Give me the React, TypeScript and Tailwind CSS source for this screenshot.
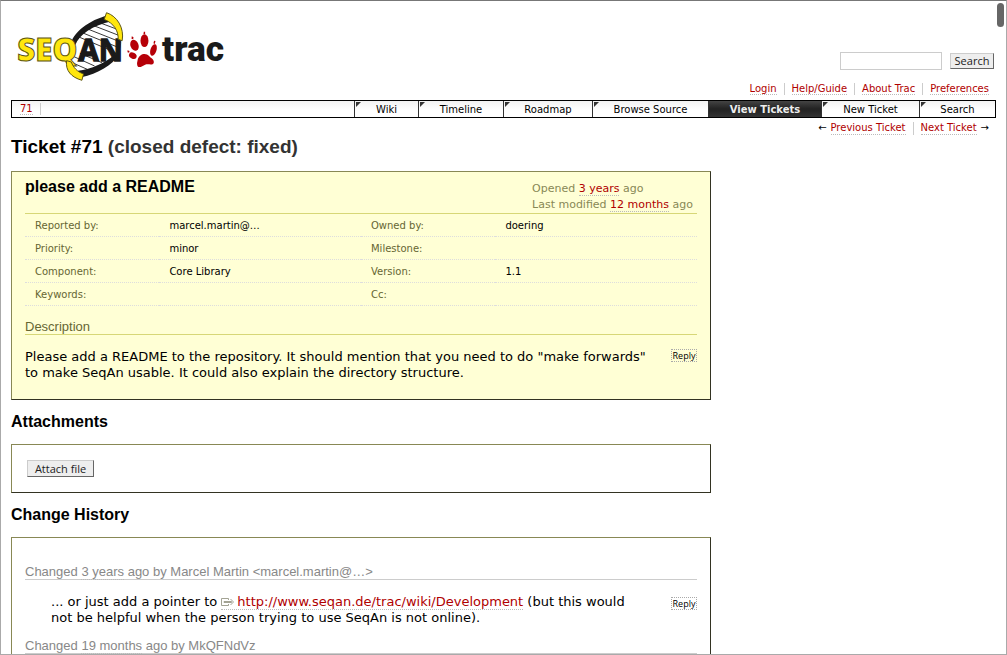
import React from "react";

const LINK =
  "text-[#b00000] border-b border-dotted border-[#bbbbbb] hover:bg-[#eeeeee]";
const BUTTON =
  "border border-t-[#cccccc] border-l-[#cccccc] border-r-[#666666] border-b-[#666666] bg-[#eeeeee] text-[11px] text-[#222222] font-['Open_Sans',sans-serif]";
const PANEL =
  "border border-t-[#888855] border-l-[#888855] border-r-[#333322] border-b-[#333322]";
const HEADING = "font-['Liberation_Sans',Arial,sans-serif] font-bold text-[16px] leading-5 text-black";

function Logo() {
  return (
    <svg
      role="img"
      aria-label="SeqAn trac"
      viewBox="45 30 640 216"
      className="block h-[72px] w-[213px]"
    >
      <path
        d="M320 50 C270 68 222 102 212 140 C204 170 206 200 238 224 C290 212 342 190 358 150 C370 118 358 72 320 50Z"
        fill="#ffffff"
        stroke="#1a1a1a"
        strokeWidth="2"
      />
      <g stroke="#1a1a1a" strokeWidth="2.6" fill="none">
        <path d="M294 66 L358 90" />
        <path d="M274 74 L362 108" />
        <path d="M256 84 L362 126" />
        <path d="M242 96 L350 140" />
        <path d="M230 108 L330 150" />
        <path d="M212 186 L262 208" />
        <path d="M222 170 L284 198" />
        <path d="M240 160 L306 188" />
      </g>
      <path
        d="M324 46 C270 58 216 98 212 136 L226 136 C238 104 278 76 336 64Z"
        fill="#1a1a1a"
      />
      <path
        d="M234 212 C276 208 314 188 340 168 L356 164 C338 196 294 220 244 232Z"
        fill="#1a1a1a"
      />
      <g fontFamily="'Open Sans', sans-serif" fontWeight="700">
        <text
          x="235"
          y="184"
          fontSize="89"
          fill="#1a1a1a"
          stroke="#1a1a1a"
          strokeWidth="4"
        >
          AN
        </text>
        <text
          x="52"
          y="184"
          fontSize="94"
          fontWeight="800"
          fill="#ffe60d"
          stroke="#5c5514"
          strokeWidth="3"
        >
          SEQ
        </text>
      </g>
      <path
        d="M320 38 C352 48 374 84 367 122 L355 118 C356 92 342 70 313 58Z"
        fill="#ffe60d"
        stroke="#5c5514"
        strokeWidth="3"
      />
      <path
        d="M200 182 C196 212 214 232 246 241 L251 222 C232 216 220 202 214 186Z"
        fill="#ffe60d"
        stroke="#5c5514"
        strokeWidth="3"
      />
      <text
        x="487"
        y="184"
        fontFamily="Roboto, sans-serif"
        fontWeight="900"
        fontSize="106"
        fill="#1a1a1a"
      >
        trac
      </text>
      <g fill="#b60008">
        <ellipse cx="434" cy="122" rx="12" ry="19" />
        <ellipse cx="404" cy="136" rx="12" ry="17" transform="rotate(-22 404 136)" />
        <ellipse cx="461" cy="150" rx="9" ry="18" transform="rotate(18 461 150)" />
        <ellipse cx="399" cy="167" rx="12" ry="9" transform="rotate(30 399 167)" />
        <path d="M414 178 C418 162 438 156 448 168 C452 174 464 178 462 188 C458 198 446 190 436 194 C428 198 418 206 413 198 C410 190 413 186 414 178Z" />
        <path d="M432 95 L436 95 L436 103 L431 102Z" />
        <path d="M396 109 L401 112 L400 118 L395 116Z" />
        <path d="M463 122 L467 123 L465 132 L461 130Z" />
        <path d="M383 151 L389 153 L388 158 L383 157Z" />
      </g>
    </svg>
  );
}

const META = ["Login", "Help/Guide", "About Trac", "Preferences"];

const TABS: { label: string; width: string; active?: boolean }[] = [
  { label: "Wiki", width: "w-[64px]" },
  { label: "Timeline", width: "w-[85px]" },
  { label: "Roadmap", width: "w-[89px]" },
  { label: "Browse Source", width: "w-[116px]" },
  { label: "View Tickets", width: "w-[113px]", active: true },
  { label: "New Ticket", width: "w-[98px]" },
  { label: "Search", width: "w-[76px]" },
];

const PROPERTIES = [
  ["Reported by:", "marcel.martin@…", "Owned by:", "doering"],
  ["Priority:", "minor", "Milestone:", ""],
  ["Component:", "Core Library", "Version:", "1.1"],
  ["Keywords:", "", "Cc:", ""],
];

function Tab({ label, width, active }: { label: string; width: string; active?: boolean }) {
  return (
    <li
      className={`relative border-l border-[#333333] ${width} ${
        active ? "bg-linear-to-b from-[#444444] via-[#222222] to-[#333333]" : ""
      }`}
    >
      <a
        href="#"
        className={`block text-center leading-[17px] ${
          active ? "font-bold text-[#eeeeee]" : "text-black"
        }`}
      >
        {label}
      </a>
      {!active && (
        <svg viewBox="0 0 5 5" className="absolute left-px top-px size-[5px]" aria-hidden="true">
          <path d="M0 0H5L0 5Z" fill="#333333" />
        </svg>
      )}
    </li>
  );
}

function ReplyButton() {
  return (
    <button
      type="button"
      className="block h-[13px] w-[26px] shrink-0 border border-dotted border-[#aaaaaa] text-center font-['Open_Sans',sans-serif] text-[9px] leading-[11px] text-black"
    >
      Reply
    </button>
  );
}

function ExternalIcon() {
  return (
    <svg viewBox="0 0 13 8" className="mr-[3px] inline-block h-2 w-[13px] align-baseline" aria-hidden="true">
      <path
        d="M7.5 2V.5H.5V7.5H7.5V6M3 3.5H10.5V4.5H3ZM9.5 1L12.5 4L9.5 7"
        fill="none"
        stroke="#999988"
        strokeWidth="0.9"
      />
    </svg>
  );
}

export default function App() {
  return (
    <div className="relative h-screen overflow-hidden border border-[#aaaaaa] border-t-[#777777] bg-white font-['DejaVu_Sans',Verdana,sans-serif] text-[13px] leading-4 text-black">
      <div className="absolute right-[2px] top-[2px] h-6 w-[7px] rounded-full bg-[#666666]" />
      <div className="px-[10px]">
        <header className="flex items-start justify-between pt-[9px]">
          <a href="#" className="ml-1">
            <Logo />
          </a>
          <div className="flex flex-col items-end pt-[42px]">
            <form className="mr-[2px] flex items-center gap-2" onSubmit={(e) => e.preventDefault()}>
              <input
                type="text"
                aria-label="Search the project"
                className="h-[18px] w-[102px] border border-[#cccccc] px-1 text-[11px]"
              />
              <button type="submit" className={`${BUTTON} h-4 w-11 leading-[14px]`}>
                Search
              </button>
            </form>
            <ul className="mt-[13px] flex text-[10px] leading-3">
              {META.map((item) => (
                <li
                  key={item}
                  className="border-r border-[#cccccc] px-[7px] last:border-r-0"
                >
                  <a href="#" className={LINK}>
                    {item}
                  </a>
                </li>
              ))}
            </ul>
          </div>
        </header>

        <nav className="mt-[5px] flex h-[18px] justify-between border border-black bg-linear-to-b from-[#f2f2f2] to-white to-60% text-[10px]">
          <div className="flex items-center pl-2">
            <div className="border-r border-[#cccccc] pr-[7px] leading-3">
              <a href="#" className={LINK}>
                71
              </a>
            </div>
          </div>
          <ul className="flex">
            {TABS.map((tab) => (
              <Tab key={tab.label} {...tab} />
            ))}
          </ul>
        </nav>

        <ul className="mt-1 flex justify-end text-[10px] leading-3">
          <li className="flex gap-1 border-r border-[#cccccc] pr-[7px]">
            <span>←</span>
            <a href="#" className={LINK}>Previous Ticket</a>
          </li>
          <li className="flex gap-1 px-[7px]">
            <a href="#" className={LINK}>Next Ticket</a>
            <span>→</span>
          </li>
        </ul>

        <main className="max-w-[700px]">
          <h1 className="font-['Liberation_Sans',Arial,sans-serif] text-[19px] font-bold leading-6">
            Ticket #71 <span className="text-[#333333]">(closed defect: fixed)</span>
          </h1>

          <section className={`${PANEL} mt-3 bg-[#ffffd5] px-[13px] pb-[18px]`}>
            <div className="flex items-start justify-between pt-[5px]">
              <h2 className={HEADING}>please add a README</h2>
              <div className="pr-1 pt-1 text-[11px] leading-4 text-[#888855]">
                <p>
                  Opened <a href="#" className={LINK}>3 years</a> ago
                </p>
                <p>
                  Last modified <a href="#" className={LINK}>12 months</a> ago
                </p>
              </div>
            </div>
            <table className="w-full table-fixed border-t border-[#d7d777] text-left text-[10px]">
              <colgroup>
                <col className="w-[20%]" />
                <col className="w-[30%]" />
                <col className="w-[20%]" />
                <col className="w-[30%]" />
              </colgroup>
              <tbody>
                {PROPERTIES.map(([nameA, valueA, nameB, valueB]) => (
                  <tr key={nameA} className="h-[23px] border-b border-dotted border-[#dddddd]">
                    <th className="pl-[10px] pt-[2px] font-normal text-[#666633]">{nameA}</th>
                    <td className="pl-[10px] pt-[2px]">{valueA}</td>
                    <th className="pl-[10px] pt-[2px] font-normal text-[#666633]">{nameB}</th>
                    <td className="pl-[10px] pt-[2px]">{valueB}</td>
                  </tr>
                ))}
              </tbody>
            </table>
            <h3 className="mt-[13px] border-b border-[#d7d777] font-['Liberation_Sans',Arial,sans-serif] text-[13px] leading-[15px] text-[#666633]">
              Description
            </h3>
            <div className="mt-[14px] flex items-start justify-between gap-6">
              <p>
                Please add a README to the repository. It should mention that you need to do "make
                forwards" to make SeqAn usable. It could also explain the directory structure.
              </p>
              <ReplyButton />
            </div>
          </section>

          <h2 className={`${HEADING} mt-3`}>Attachments</h2>
          <section className={`${PANEL} mt-3 px-[15px] py-[15px]`}>
            <button type="button" className={`${BUTTON} block h-[17px] w-[67px] leading-[15px]`}>
              Attach file
            </button>
          </section>

          <h2 className={`${HEADING} mt-3`}>Change History</h2>
          <section className={`${PANEL} mt-3 px-[13px] pb-4 pt-[26px]`}>
            <h3 className="border-b border-[#cccccc] font-['Liberation_Sans',Arial,sans-serif] text-[13px] leading-[15px] text-[#888888]">
              Changed{" "}
              <a href="#" className="border-b border-dotted border-[#bbbbbb]">3 years</a> ago by
              Marcel Martin &lt;marcel.martin@…&gt;
            </h3>
            <div className="mt-[14px] flex items-start justify-between gap-6 pl-[26px]">
              <p>
                ... or just add a pointer to{" "}
                <a href="#" className={LINK}>
                  <ExternalIcon />
                  http://www.seqan.de/trac/wiki/Development
                </a>{" "}
                (but this would not be helpful when the person trying to use SeqAn is not online).
              </p>
              <div className="shrink-0 pt-[3px]">
                <ReplyButton />
              </div>
            </div>
            <h3 className="mt-3 border-b border-[#cccccc] font-['Liberation_Sans',Arial,sans-serif] text-[13px] leading-[15px] text-[#888888]">
              Changed{" "}
              <a href="#" className="border-b border-dotted border-[#bbbbbb]">19 months</a> ago by
              MkQFNdVz
            </h3>
          </section>
        </main>
      </div>
    </div>
  );
}
